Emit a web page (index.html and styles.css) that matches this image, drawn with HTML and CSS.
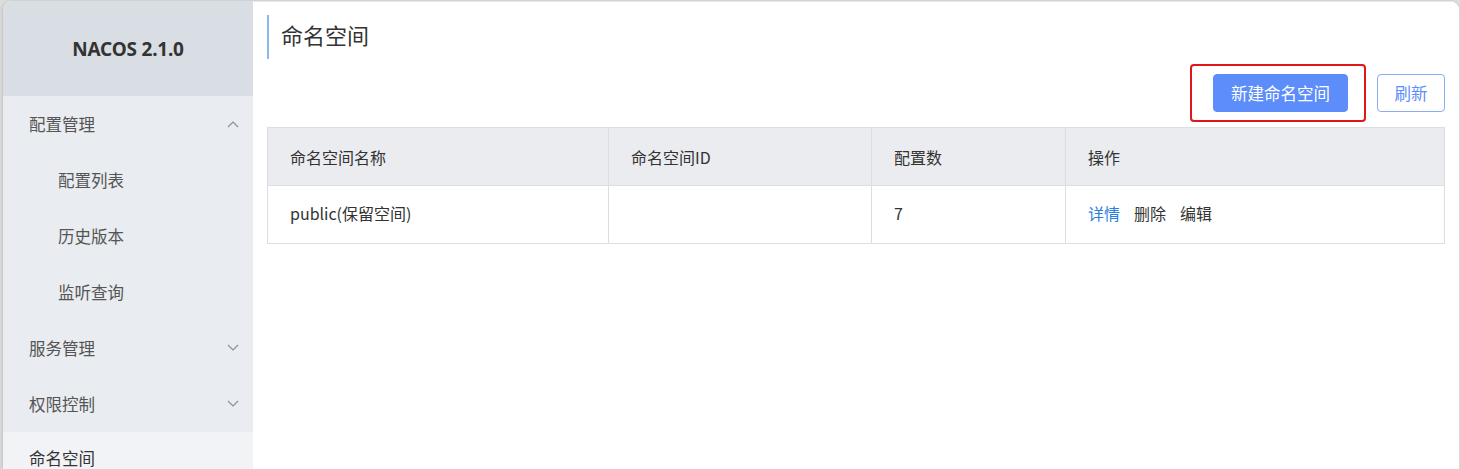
FILE: index.html
```html
<!DOCTYPE html>
<html lang="zh-CN">
<head>
<meta charset="utf-8">
<title>命名空间 - Nacos</title>
<link rel="stylesheet" href="styles.css">
</head>
<body>
<div class="app">
  <aside class="sidebar">
    <div class="brand">NACOS 2.1.0</div>
    <ul class="menu">
      <li class="menu-item group">
        <span>配置管理</span>
        <svg class="chev" width="12" height="8" viewBox="0 0 12 8"><path d="M1 7 L6 2 L11 7" fill="none" stroke="#8a8f99" stroke-width="1.2"/></svg>
      </li>
      <li class="menu-item sub">配置列表</li>
      <li class="menu-item sub">历史版本</li>
      <li class="menu-item sub">监听查询</li>
      <li class="menu-item group">
        <span>服务管理</span>
        <svg class="chev" width="12" height="8" viewBox="0 0 12 8"><path d="M1 1 L6 6 L11 1" fill="none" stroke="#8a8f99" stroke-width="1.2"/></svg>
      </li>
      <li class="menu-item group">
        <span>权限控制</span>
        <svg class="chev" width="12" height="8" viewBox="0 0 12 8"><path d="M1 1 L6 6 L11 1" fill="none" stroke="#8a8f99" stroke-width="1.2"/></svg>
      </li>
      <li class="menu-item active">命名空间</li>
    </ul>
  </aside>
  <main class="main">
    <h1 class="page-title">命名空间</h1>
    <div class="toolbar">
      <span class="highlight"><button class="btn btn-primary">新建命名空间</button></span>
      <button class="btn btn-outline">刷新</button>
    </div>
    <table class="ns-table">
      <colgroup>
        <col class="c1"><col class="c2"><col class="c3"><col class="c4">
      </colgroup>
      <thead>
        <tr><th>命名空间名称</th><th>命名空间ID</th><th>配置数</th><th>操作</th></tr>
      </thead>
      <tbody>
        <tr>
          <td>public(保留空间)</td>
          <td></td>
          <td>7</td>
          <td class="ops"><a class="link">详情</a><span class="op">删除</span><span class="op">编辑</span></td>
        </tr>
      </tbody>
    </table>
  </main>
</div>
</body>
</html>
```

FILE: styles.css
```css
* { box-sizing: border-box; }
html, body { margin: 0; padding: 0; }
body {
  background: #dcdcdc;
  font-family: "Noto Sans CJK SC", "Noto Sans", sans-serif;
  color: #333;
  height: 469px;
  overflow: hidden;
}
.app {
  display: flex;
  margin: 1px 1px 0 3px;
  height: 468px;
  border-radius: 9px 9px 0 0;
  overflow: hidden;
  background: #fff;
  box-shadow: -1px 0 3px rgba(0,0,0,0.12);
}
.sidebar {
  width: 250px;
  flex: none;
  background: #e9ecf0;
  display: flex;
  flex-direction: column;
  overflow: hidden;
}
.brand {
  flex: none;
  height: 95px;
  background: #d9dee5;
  display: flex;
  align-items: center;
  justify-content: center;
  font-family: "Noto Sans", "Noto Sans CJK SC", sans-serif;
  font-weight: 700;
  font-size: 19px;
  color: #333;
  letter-spacing: -0.2px;
}
.menu {
  list-style: none;
  margin: 0;
  padding: 0;
  flex: none;
}
.menu-item {
  height: 56px;
  display: flex;
  align-items: center;
  justify-content: space-between;
  padding: 0 14px 0 26px;
  font-size: 16.5px;
  color: #555;
}
.menu-item.sub { padding-left: 55px; }
.menu-item.active {
  background: #f2f3f6;
  color: #333;
  align-items: flex-start;
  padding-top: 14px;
}
.chev { display: block; }
.main {
  flex: 1;
  min-width: 0;
  padding: 13px 14px 0 14px;
  border-top: 1px solid #e8e8e8;
}
.page-title {
  margin: 0;
  height: 44px;
  display: flex;
  align-items: center;
  border-left: 2px solid #8ab7ec;
  padding-left: 12px;
  padding-bottom: 6px;
  font-size: 22px;
  font-weight: 400;
  color: #333;
}
.toolbar {
  display: flex;
  justify-content: flex-end;
  align-items: center;
  margin-top: 15px;
  padding-right: 0;
  gap: 29px;
}
.highlight {
  position: relative;
  display: inline-flex;
}
.highlight::after {
  content: "";
  position: absolute;
  left: -23px;
  right: -18px;
  top: -10px;
  bottom: -10px;
  border: 2px solid #e0161b;
  border-radius: 4px;
  pointer-events: none;
}
.btn {
  height: 38px;
  font-family: "Noto Sans CJK SC", sans-serif;
  font-size: 16.5px;
  border-radius: 4px;
  cursor: pointer;
  padding: 0 17px;
}
.btn-primary {
  background: #5c8dfa;
  border: 1px solid #5c8dfa;
  color: #fff;
  width: 135px;
}
.btn-outline {
  background: #fff;
  border: 1px solid #8aabf5;
  color: #5c8dfa;
  width: 68px;
  padding: 0;
}
.ns-table {
  width: 100%;
  margin-top: 15px;
  border-collapse: collapse;
  table-layout: fixed;
  font-size: 16px;
  border: 1px solid #dcdee3;
}
.ns-table .c1 { width: 341px; }
.ns-table .c2 { width: 263px; }
.ns-table .c3 { width: 194px; }
.ns-table th, .ns-table td {
  height: 58px;
  text-align: left;
  padding: 0 22px;
  border: 1px solid #dcdee3;
  font-weight: 400;
  color: #333;
}
.ns-table td { padding-bottom: 3px; }
.ns-table th { background: #ebecf0; }
.ns-table td { background: #fff; }
.ops { white-space: nowrap; }
.link { color: #2a7ee0; margin-right: 14px; cursor: pointer; }
.op { color: #333; margin-right: 14px; }
```
